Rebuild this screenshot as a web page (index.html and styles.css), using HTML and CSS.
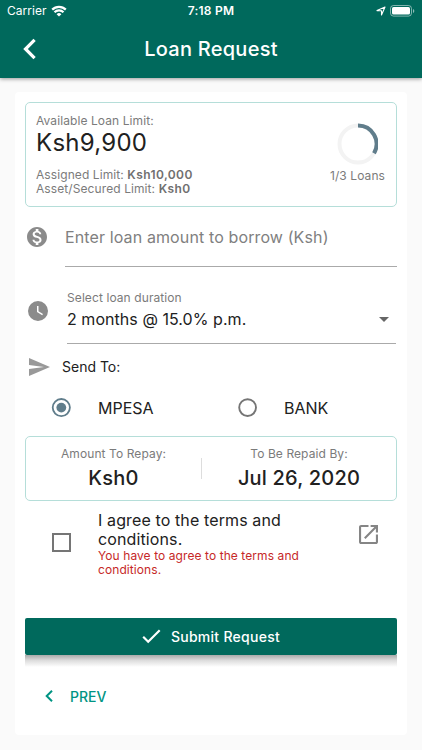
FILE: index.html
```html
<!DOCTYPE html>
<html lang="en">
<head>
<meta charset="utf-8">
<title>Loan Request</title>
<link rel="stylesheet" href="styles.css">
</head>
<body>
<header class="appbar">
  <div class="status">
    <div class="carrier"><span>Carrier</span>
      <svg width="16" height="12" viewBox="0 0 16 12" fill="none" stroke="#fff" stroke-width="2.2"><path d="M1.2 4.600a9.600 9.600 0 0 1 13.600 0M3.500 7.300a6.300 6.300 0 0 1 9 0"/><path d="M5.600 9.200a3.400 3.400 0 0 1 4.800 0L8 11.600z" fill="#fff" stroke="none"/></svg>
    </div>
    <span class="time">7:18 PM</span>
    <div class="indicators">
      <svg width="10" height="10" viewBox="0 0 10 10" fill="none" stroke="#fff" stroke-width="1.1" stroke-linejoin="round"><path d="M9 1 5.500 9V4.800L1 4.600z"/></svg>
      <svg width="25" height="12" viewBox="0 0 25 12"><rect x=".5" y=".5" width="21" height="10.600" rx="3" fill="none" stroke="#fff" stroke-opacity=".5"/><rect x="2" y="2" width="18" height="7.600" rx="1.600" fill="#fff"/><path d="M23 4v4q1.300-.6 1.300-2T23 4" fill="#fff" fill-opacity=".55"/></svg>
    </div>
  </div>
  <div class="titlebar">
    <svg class="back" width="14" height="22" viewBox="0 0 14 22" fill="none" stroke="#fff" stroke-width="3.200"><path d="M11.600 1.800 2.500 11l9.100 9.200"/></svg>
    <h1>Loan Request</h1>
  </div>
</header>
<main class="card">
  <section class="limit outlined">
    <div class="limit-text">
      <p class="label available">Available Loan Limit:</p>
      <p class="amount">Ksh9,900</p>
      <p class="label assigned">Assigned Limit: <b>Ksh10,000</b></p>
      <p class="label secured">Asset/Secured Limit: <b>Ksh0</b></p>
    </div>
    <div class="loans">
      <svg width="42" height="42" viewBox="0 0 42 42" fill="none" stroke-width="4"><circle cx="22" cy="21" r="18.500" stroke="#f3f3f3"/><path d="M22 2.500A18.500 18.500 0 0 1 38 30.300" stroke="#607d8b"/></svg>
      <p class="label count">1/3 Loans</p>
    </div>
  </section>
  <div class="field borrow">
    <svg width="24" height="24" viewBox="0 0 24 24" fill="#8b8b8b"><path d="M12 2C6.480 2 2 6.480 2 12s4.480 10 10 10 10-4.480 10-10S17.520 2 12 2zm1.410 16.090V20h-2.670v-1.930c-1.710-.360-3.160-1.460-3.270-3.400h1.960c.1 1.050.820 1.870 2.650 1.870 1.960 0 2.400-.980 2.400-1.590 0-.830-.440-1.610-2.670-2.140-2.480-.6-4.180-1.620-4.180-3.670 0-1.720 1.390-2.840 3.110-3.210V4h2.670v1.950c1.860.450 2.790 1.860 2.850 3.390H14.300c-.050-1.110-.640-1.870-2.220-1.870-1.500 0-2.400.680-2.400 1.640 0 .840.650 1.390 2.670 1.910s4.180 1.390 4.180 3.910c-.010 1.830-1.380 2.830-3.120 3.160z"/></svg>
    <div class="input"><span class="hint">Enter loan amount to borrow (Ksh)</span></div>
  </div>
  <div class="field duration">
    <svg width="24" height="24" viewBox="0 0 24 24" fill="#8b8b8b"><path fill-rule="evenodd" d="M12 2a10 10 0 1 0 0 20 10 10 0 0 0 0-20zm4.200 14.200L11 13V7h1.500v5.200l4.500 2.700z"/></svg>
    <div class="select">
      <p class="label select-label">Select loan duration</p>
      <div class="value"><span>2 months @ 15.0% p.m.</span>
        <svg width="10" height="5" viewBox="0 0 10 5"><path d="M0 0h10L5 5z" fill="#666"/></svg>
      </div>
    </div>
  </div>
  <div class="sendto">
    <svg width="21" height="18" viewBox="2 3 21 18" fill="#999"><path d="M2.010 21 23 12 2.010 3 2 10l15 2-15 2z"/></svg>
    <span>Send To:</span>
  </div>
  <div class="options">
    <div class="option"><svg width="20" height="20" viewBox="0 0 20 20"><circle cx="10.300" cy="9.600" r="8.600" fill="none" stroke="#607d8b" stroke-width="1.800"/><circle cx="10.300" cy="9.600" r="4.900" fill="#607d8b"/></svg><span>MPESA</span></div>
    <div class="option"><svg width="20" height="20" viewBox="0 0 20 20"><circle cx="10.600" cy="9.600" r="8.400" fill="none" stroke="#757575" stroke-width="1.900"/></svg><span class="bank">BANK</span></div>
  </div>
  <section class="repay outlined">
    <div class="cell"><p class="label repay-label">Amount To Repay:</p><p class="figure">Ksh0</p></div>
    <div class="divider"></div>
    <div class="cell date"><p class="label date-label">To Be Repaid By:</p><p class="figure date-figure">Jul 26, 2020</p></div>
  </section>
  <div class="terms">
    <div class="checkbox"></div>
    <div class="terms-text"><p class="agree">I agree to the terms and<br>conditions.</p><p class="error">You have to agree to the terms and<br>conditions.</p></div>
    <svg class="open" width="19" height="19" viewBox="3 3 18 18" fill="#858585"><path d="M19 19H5V5h7V3H5c-1.110 0-2 .9-2 2v14c0 1.100.890 2 2 2h14c1.100 0 2-.9 2-2v-7h-2v7zM14 3v2h3.590l-9.830 9.830 1.410 1.410L19 6.410V10h2V3h-7z"/></svg>
  </div>
  <div class="submit">
    <div class="button"><svg width="19" height="15" viewBox="0 0 19 15" fill="none" stroke="#fff" stroke-width="2.200"><path d="m1.200 7.800 5 5L17.700 1.300"/></svg><span>Submit Request</span></div>
    <div class="shade"></div>
  </div>
  <div class="prev"><svg width="8" height="12" viewBox="0 0 8 12" fill="none" stroke="#009483" stroke-width="2"><path d="M7 .8 1.700 6 7 11.200"/></svg><span>PREV</span></div>
</main>
</body>
</html>
```
FILE: styles.css
```css
* { box-sizing: border-box; }
body { margin: 0; height: 750px; overflow: hidden; background: #fafafa; color: #212121; font-family: Inter, sans-serif; font-size: 16px; }
p, h1 { margin: 0; white-space: nowrap; }
svg { display: block; flex: none; }
span { white-space: nowrap; }

.appbar { height: 78px; background: #00695c; color: #fff; box-shadow: 0 1px 4px rgba(0,0,0,.4); }
.status { height: 22px; display: grid; grid-template-columns: 1fr auto 1fr; align-items: center; padding: 0 7px; font-size: 12px; line-height: 22px; }
.carrier { display: flex; gap: 4px; align-items: center; letter-spacing: .05px; }
.time { font-weight: 600; letter-spacing: .2px; }
.indicators { display: flex; justify-content: flex-end; align-items: center; gap: 4px; }
.titlebar { height: 56px; display: grid; grid-template-columns: 60px 1fr 60px; align-items: center; }
.back { margin: 0 0 2px 23px; }
h1 { font-size: 20px; font-weight: 500; line-height: 24px; text-align: center; letter-spacing: .25px; margin-bottom: 2px; }

.card { margin: 14px 15px 0; height: 643px; padding: 10px; background: #fff; border-radius: 4px; }
.outlined { border: 1px solid #b5ded9; border-radius: 5px; }
.label { font-size: 12px; line-height: 14px; color: #7b7b7b; letter-spacing: .09px; }

.limit { height: 105px; display: flex; justify-content: space-between; padding: 11px 11px 0 10px; }
.amount { font-size: 24px; line-height: 30px; letter-spacing: .25px; }
.assigned { margin-top: 10px; }
.label b { font-weight: 600; color: #707070; letter-spacing: .4px; }
.loans { display: flex; flex-direction: column; align-items: center; padding-top: 9px; }
.count { margin-top: 3px; line-height: 16px; }

.field { display: flex; }
.borrow { height: 60px; padding-top: 18px; }
.input { width: 332px; height: 42px; margin-left: 16px; padding-top: 2px; border-bottom: 1px solid #aaa; }
.hint { color: #808080; line-height: 20px; letter-spacing: .12px; }
.duration { height: 77px; align-items: center; padding-left: 1px; }
.duration > svg { margin-top: 11px; }
.select { width: 329px; height: 77px; margin-left: 17px; padding-top: 24px; border-bottom: 1px solid #aaa; }
.value { display: flex; align-items: center; justify-content: space-between; height: 20px; margin-top: 4px; padding-right: 7px; letter-spacing: .05px; }
.sendto { display: flex; align-items: center; height: 46px; padding-left: 4px; gap: 12px; font-size: 14px; }
.sendto span { margin-bottom: 2px; }
.options { display: grid; grid-template-columns: 1fr 1fr; height: 46px; padding-top: 8px; }
.option { display: flex; height: 20px; align-items: center; gap: 27px; padding-left: 26px; }

.repay { display: flex; height: 65px; align-items: center; }
.cell { width: 175px; text-align: center; }
.cell.date { flex: 1; }
.divider { width: 1px; height: 21px; background: #ddd; }
.figure { font-size: 20px; font-weight: 500; line-height: 26px; margin-top: 4px; letter-spacing: .2px; }
.terms { display: flex; height: 117px; padding: 10px 19px 0 27px; }
.checkbox { width: 19px; height: 19px; margin-top: 22px; border: 2px solid #757575; }
.terms-text { margin-left: 27px; flex: 1; }
.agree { line-height: 19px; letter-spacing: .12px; }
.error { color: #c62828; font-size: 12px; line-height: 14px; letter-spacing: .08px; }
.open { margin-top: 14px; }

.submit { height: 55px; }
.button { height: 37px; display: flex; justify-content: center; align-items: center; gap: 10px; background: #00695c; color: #fff; border-radius: 2px; font-size: 14px; font-weight: 500; letter-spacing: .28px; }
.shade { height: 12px; background: linear-gradient(#aaa, #dcdcdc 45%, #fff); }
.prev { display: flex; align-items: center; height: 46px; padding-left: 20px; gap: 17px; color: #009483; font-size: 14px; font-weight: 500; }
```
